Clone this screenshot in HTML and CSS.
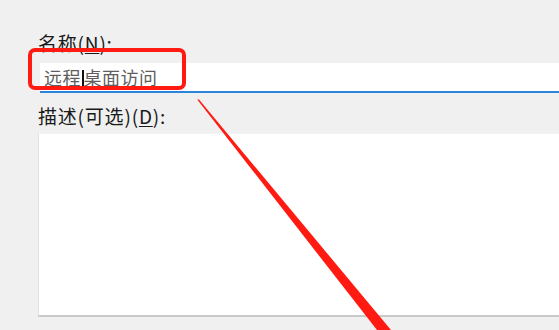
FILE: index.html
```html
<!DOCTYPE html>
<html lang="zh-CN">
<head>
<meta charset="utf-8">
<title>属性</title>
<link rel="stylesheet" href="styles.css">
</head>
<body>
<div class="dialog">
  <label class="label">名称(<u>N</u>):</label>
  <div class="input"><span>远程</span><span class="caret"></span><span>桌面访问</span></div>
  <label class="label label-desc">描述(可选)(<u>D</u>):</label>
  <div class="textarea"></div>
  <div class="highlight"></div>
  <svg class="arrow" width="559" height="330" viewBox="0 0 559 330">
    <polygon points="197.2,99.5 199,99.5 391,330 377,330" fill="#ff1a12"/>
  </svg>
</div>
</body>
</html>
```
FILE: styles.css
```css
html, body {
  margin: 0;
  padding: 0;
  background: #f0f0f0;
  width: 559px;
  height: 330px;
  overflow: hidden;
}
.dialog {
  position: relative;
  width: 559px;
  height: 330px;
  box-sizing: border-box;
  padding: 29px 0 0 38px;
  font-family: "Noto Sans CJK SC", "Noto Sans", sans-serif;
  color: #1a1a1a;
}
.label {
  display: block;
  font-size: 19px;
  line-height: 28px;
  letter-spacing: 0.8px;
  height: 28px;
}
.label u {
  text-decoration-thickness: 1px;
  text-underline-offset: 2px;
}
.input {
  margin: 6px 0 0 2px;
  height: 28px;
  background: #ffffff;
  border-bottom: 2px solid #2b86d9;
  padding-left: 4px;
  font-size: 18px;
  line-height: 28px;
  letter-spacing: 0.5px;
  color: #5e5e5e;
  white-space: nowrap;
}
.caret {
  display: inline-block;
  width: 1.5px;
  height: 19px;
  background: #111;
  vertical-align: -4px;
  margin: 0 0 0 1px;
}
.label-desc {
  margin-top: 9px;
}
.textarea {
  margin-top: 3px;
  height: 181px;
  background: #ffffff;
  border-left: 1px solid #e2e2e2;
  border-top: 1px solid #f3f3f3;
  border-bottom: 2px solid #c9c9c9;
}
.highlight {
  position: absolute;
  left: 28px;
  top: 48px;
  width: 158px;
  height: 42px;
  box-sizing: border-box;
  border: 4px solid #ff1a12;
  border-radius: 7px;
}
.arrow {
  position: absolute;
  left: 0;
  top: 0;
}
```
